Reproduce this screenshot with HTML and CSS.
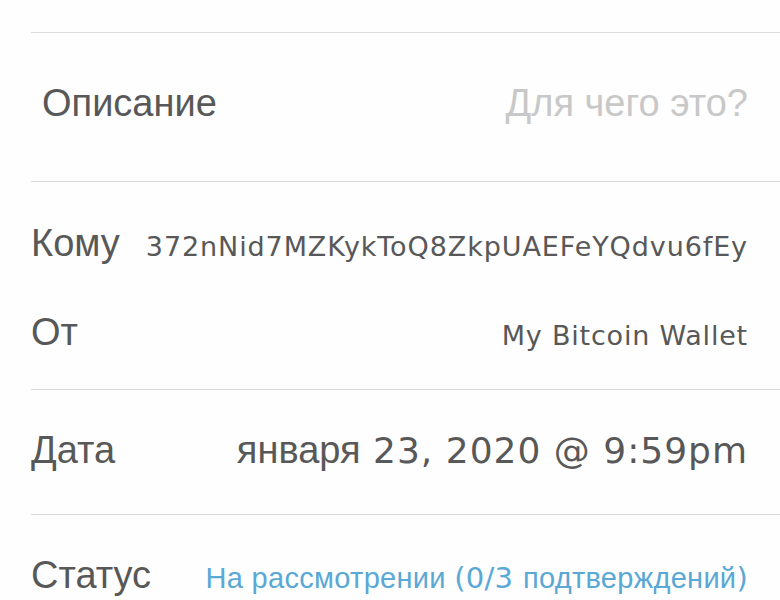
FILE: index.html
```html
<!DOCTYPE html>
<html lang="ru">
<head>
    <meta charset="utf-8">
    <title>Детали транзакции</title>
    <link rel="stylesheet" href="styles.css">
</head>
<body>
    <!-- детали отправки -->
    <div class="details">
        <div class="section section-desc">
            <div class="row">
                <span class="label label-input">Описание</span>
                <span class="placeholder">Для чего это?</span>
            </div>
        </div>

        <div class="section section-parties">
            <div class="row row-to">
                <span class="label">Кому</span>
                <span class="value address"><span class="lat">372nNid7MZKykToQ8ZkpUAEFeYQdvu6fEy</span></span>
            </div>
            <div class="row row-from">
                <span class="label">От</span>
                <span class="value wallet"><span class="lat">My Bitcoin Wallet</span></span>
            </div>
        </div>

        <div class="section section-date">
            <div class="row">
                <span class="label">Дата</span>
                <span class="value date">января<span class="lat"> 23, 2020 @ 9:59pm</span></span>
            </div>
        </div>

        <div class="section section-status">
            <div class="row">
                <span class="label">Статус</span>
                <span class="value status">На рассмотрении <span class="lat">(0/3 </span>подтверждений<span class="lat">)</span></span>
            </div>
        </div>
    </div>
</body>
</html>
```

FILE: styles.css
```css
body {
    margin: 0;
    padding: 0;
    background-color: #fefefe;
    font-family: "Liberation Sans", Arial, sans-serif;
    color: #555;
    overflow: hidden;
}

.details {
    padding-top: 32px;
}

.section {
    margin-left: 31px;
    padding-right: 32px;
    border-top: 1px solid #dcdcdc;
}

.row {
    display: flex;
    justify-content: space-between;
    align-items: baseline;
    line-height: 44px;
    white-space: nowrap;
}

.label {
    font-size: 38px;
    color: #585858;
}

.label-input {
    padding-left: 11px;
}

.placeholder {
    font-size: 38px;
    color: #c8c8c8;
}

.value {
    color: #585858;
}

/* латиница и цифры — геометрический шрифт */
.lat {
    font-family: "DejaVu Sans", sans-serif;
    line-height: 1;
}

.section-desc {
    padding-top: 48px;
    padding-bottom: 56px;
}

.section-parties {
    padding-top: 39px;
    padding-bottom: 31px;
}

.row-from {
    margin-top: 41px;
}

.address {
    font-size: 27px;
    letter-spacing: 0.9px;
}

.wallet {
    font-size: 27px;
    letter-spacing: 0.8px;
}

.section-date {
    padding-top: 38px;
    padding-bottom: 42px;
}

.date {
    font-size: 38px;
}

.date .lat {
    font-size: 36px;
    letter-spacing: 1px;
}

.section-status {
    padding-top: 38px;
    padding-bottom: 42px;
}

.status {
    font-size: 29px;
    letter-spacing: 0.3px;
    color: #5aa8d5;
}
```
